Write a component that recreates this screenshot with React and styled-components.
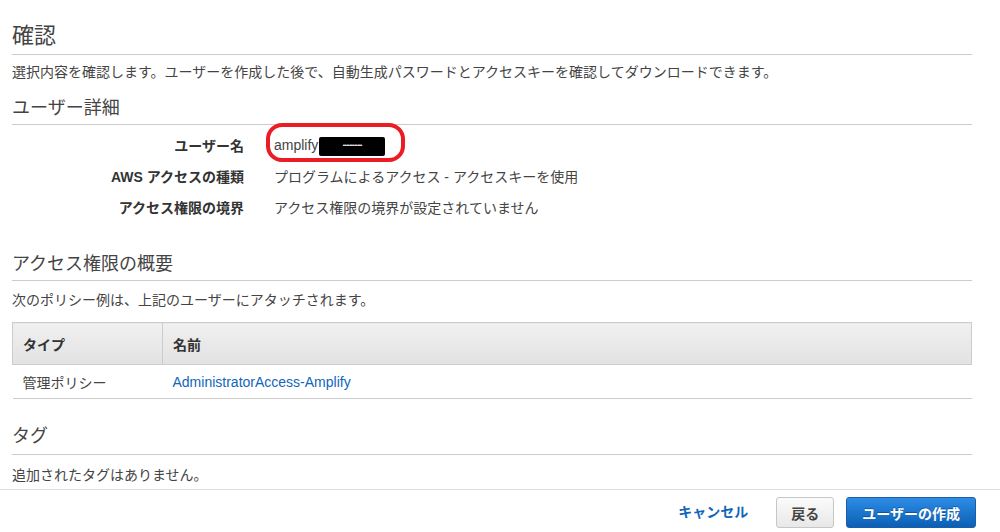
import React from 'react';
import styled, { createGlobalStyle } from 'styled-components';

const GlobalStyle = createGlobalStyle`
  html, body {
    margin: 0;
    padding: 0;
    background: #fff;
  }
  body {
    font-family: 'Liberation Sans', 'Noto Sans CJK JP', sans-serif;
    color: #444;
    font-size: 14px;
  }
`;

const Page = styled.div`
  width: 1000px;
  height: 532px;
  display: flex;
  flex-direction: column;
  overflow: hidden;
`;

const Content = styled.div`
  flex: 1;
  min-height: 0;
  padding: 0 28px 0 12px;
`;

const Title = styled.h1`
  margin: 0;
  padding: 22px 0 4px;
  font-size: 22px;
  line-height: 28px;
  font-weight: normal;
  color: #444;
  border-bottom: 1px solid #ccc;
`;

const SectionTitle = styled.h2`
  margin: ${({ $top }) => $top}px 0 0;
  padding: 0 0 ${({ $bottom }) => $bottom || 4}px;
  font-size: 18px;
  line-height: 24px;
  font-weight: normal;
  color: #444;
  border-bottom: 1px solid #ccc;
`;

const Text = styled.p`
  margin: ${({ $top }) => $top}px 0 0;
  font-size: 14px;
  line-height: 20px;
  color: #444;
`;

const Details = styled.dl`
  margin: 5px 0 0;
  display: grid;
  grid-template-columns: 232px 1fr;
  column-gap: 30px;
  grid-auto-rows: 31px;
  align-items: center;
`;

const Label = styled.dt`
  text-align: right;
  font-weight: bold;
  color: #333;
  line-height: 20px;
`;

const Value = styled.dd`
  margin: 0;
  line-height: 20px;
  color: #444;
  position: relative;
`;

const Highlight = styled.span`
  position: absolute;
  left: -8px;
  top: -12px;
  width: 131px;
  height: 31px;
  border: 4px solid #ec1c24;
  border-radius: 16px;
`;

const Redacted = styled.span`
  display: inline-block;
  vertical-align: middle;
  width: 66px;
  height: 19px;
  margin-left: 1px;
  background: #000;
  border-radius: 2px;
  color: #fff;
  font-size: 6px;
  line-height: 17px;
  letter-spacing: -0.5px;
  text-align: center;
  overflow: hidden;
`;

const Table = styled.table`
  margin-top: 12px;
  width: 100%;
  border-collapse: collapse;
`;

const HeadCell = styled.th`
  height: 42px;
  padding: 0 10px;
  text-align: left;
  font-weight: bold;
  color: #333;
  background: linear-gradient(#f0f0f0, #e2e2e2);
  border: 1px solid #ccc;
  width: ${({ $w }) => ($w ? `${$w}px` : 'auto')};
  box-sizing: border-box;
`;

const Cell = styled.td`
  height: 34px;
  padding: 0 10px;
  border-bottom: 1px solid #ccc;
  color: #444;
  box-sizing: border-box;
`;

const Link = styled.a`
  color: #1166bb;
  text-decoration: none;
`;

const Footer = styled.div`
  box-sizing: border-box;
  flex: none;
  border-top: 1px solid #ddd;
  height: 43px;
  display: flex;
  justify-content: flex-end;
  align-items: flex-start;
  padding: 7px 24px 0 0;
  gap: 12px;
`;

const CancelLink = styled.a`
  color: #1166bb;
  font-weight: bold;
  font-size: 14px;
  line-height: 31px;
  margin-right: 16px;
`;

const Button = styled.button`
  height: 31px;
  padding: 0 ${({ $primary }) => ($primary ? 15 : 14)}px;
  font-family: inherit;
  font-size: 14px;
  font-weight: bold;
  border-radius: 3px;
  cursor: pointer;
  color: ${({ $primary }) => ($primary ? '#fff' : '#444')};
  border: 1px solid ${({ $primary }) => ($primary ? '#1b5ea8' : '#c6c6c6')};
  background: ${({ $primary }) =>
    $primary ? 'linear-gradient(#2e8ce6, #0b5fb5)' : 'linear-gradient(#fbfbfb, #e8e8e8)'};
  text-shadow: ${({ $primary }) => ($primary ? '0 -1px 0 rgba(0,0,0,0.3)' : 'none')};
`;

export default function App() {
  return (
    <Page>
      <GlobalStyle />
      <Content>
        <Title>確認</Title>
        <Text $top={7}>
          選択内容を確認します。ユーザーを作成した後で、自動生成パスワードとアクセスキーを確認してダウンロードできます。
        </Text>

        <SectionTitle $top={14}>ユーザー詳細</SectionTitle>
        <Details>
          <Label>ユーザー名</Label>
          <Value>
            amplify<Redacted>••••••••••••</Redacted>
            <Highlight />
          </Value>
          <Label>AWS アクセスの種類</Label>
          <Value>プログラムによるアクセス - アクセスキーを使用</Value>
          <Label>アクセス権限の境界</Label>
          <Value>アクセス権限の境界が設定されていません</Value>
        </Details>

        <SectionTitle $top={29}>アクセス権限の概要</SectionTitle>
        <Text $top={9}>次のポリシー例は、上記のユーザーにアタッチされます。</Text>
        <Table>
          <thead>
            <tr>
              <HeadCell $w={150}>タイプ</HeadCell>
              <HeadCell>名前</HeadCell>
            </tr>
          </thead>
          <tbody>
            <tr>
              <Cell>管理ポリシー</Cell>
              <Cell>
                <Link href="#">AdministratorAccess-Amplify</Link>
              </Cell>
            </tr>
          </tbody>
        </Table>

        <SectionTitle $top={25} $bottom={6}>タグ</SectionTitle>
        <Text $top={10}>追加されたタグはありません。</Text>
      </Content>
      <Footer>
        <CancelLink>キャンセル</CancelLink>
        <Button>戻る</Button>
        <Button $primary>ユーザーの作成</Button>
      </Footer>
    </Page>
  );
}
